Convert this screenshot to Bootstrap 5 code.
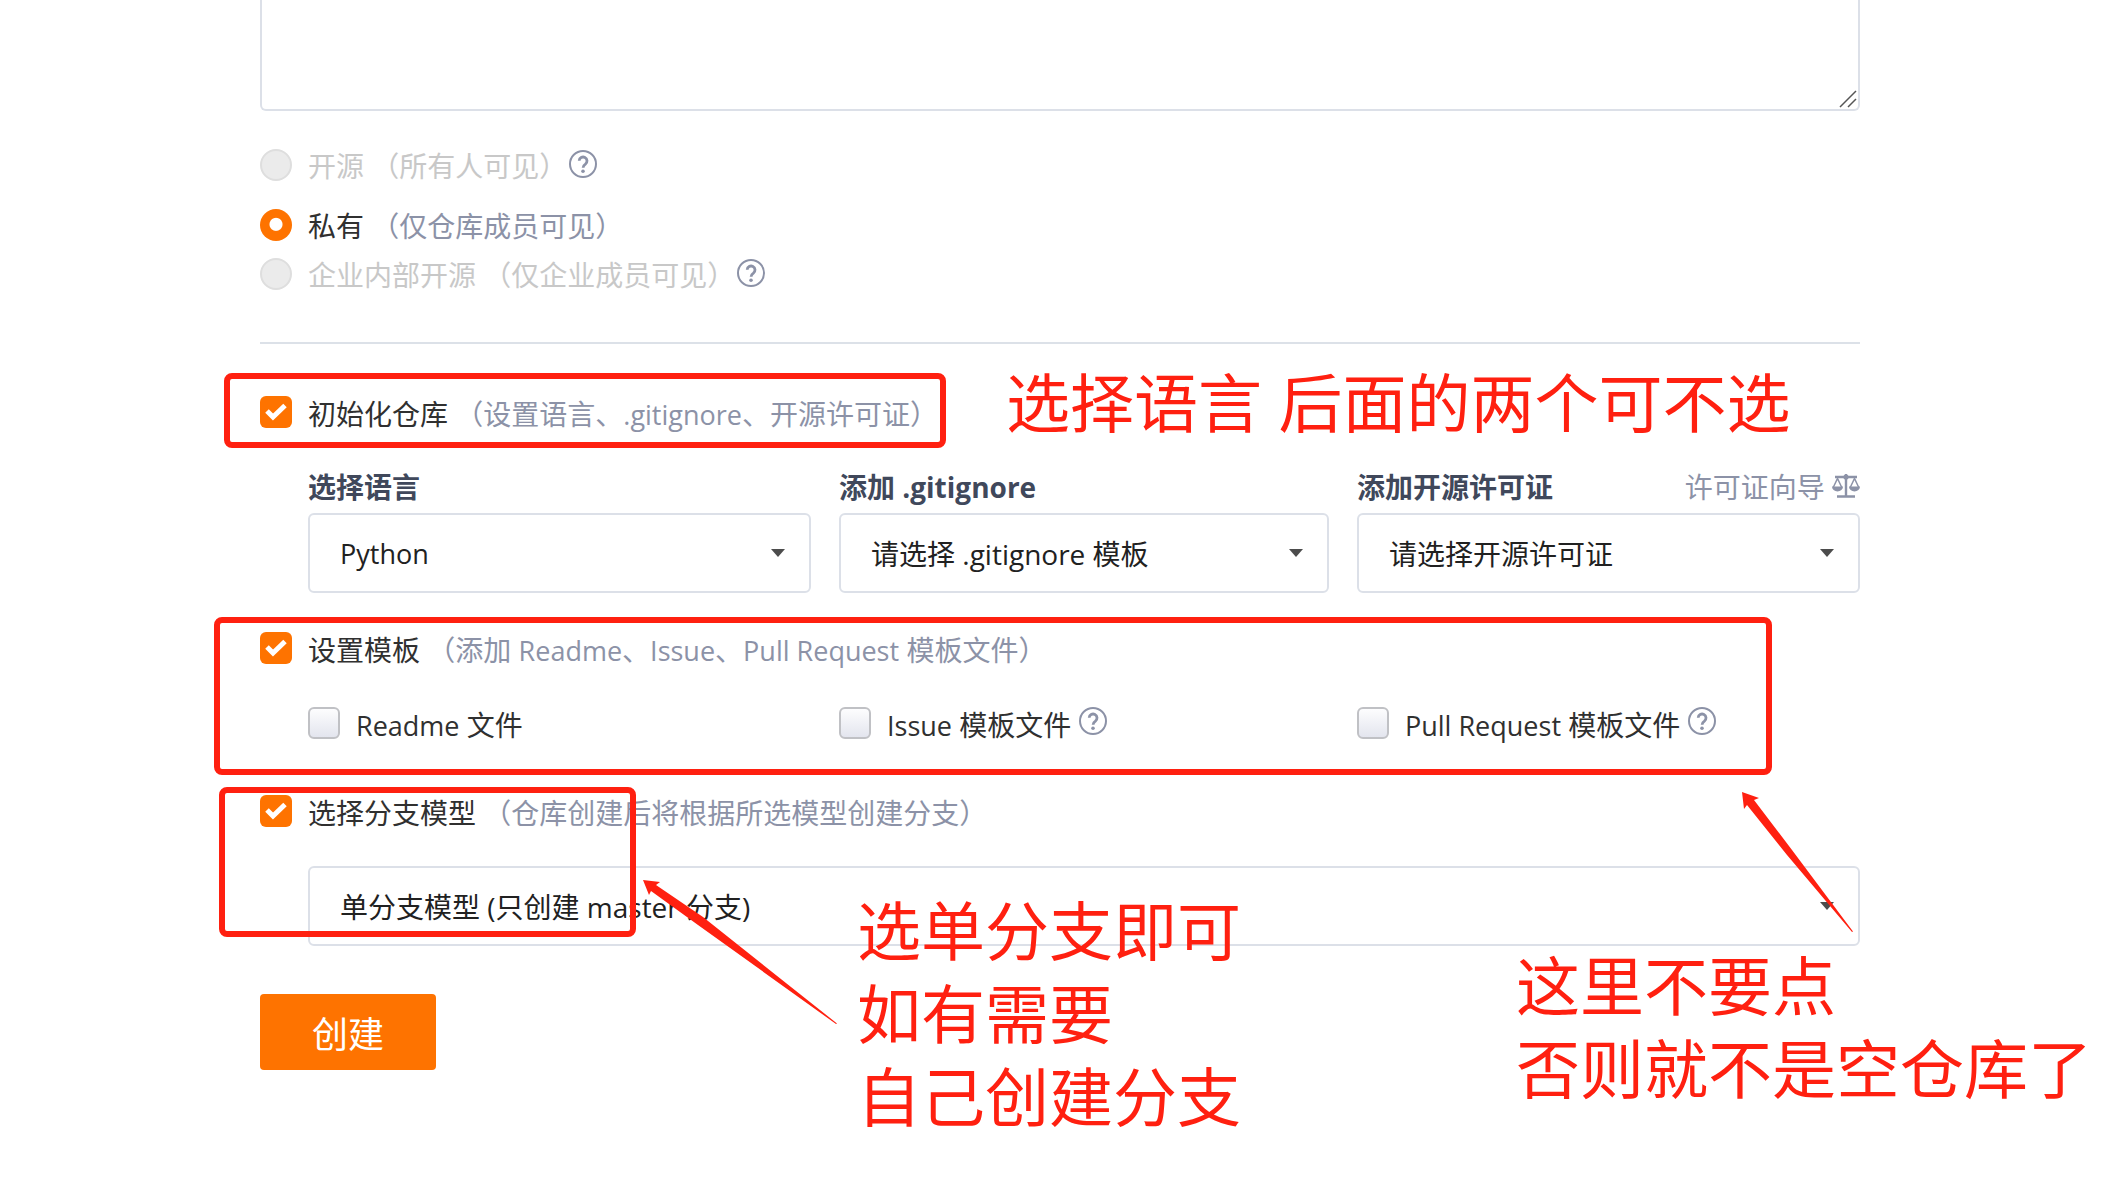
<!DOCTYPE html>
<html lang="zh-CN">
<head>
<meta charset="utf-8">
<meta name="viewport" content="width=device-width, initial-scale=1">
<title>新建仓库</title>
<link href="https://cdn.jsdelivr.net/npm/bootstrap@5.3.0/dist/css/bootstrap.min.css" rel="stylesheet">
<style>
  :root { --ink: #303030; --muted-ink: #8c92a7; --line: #dce0e8; --brand: #fe7300; --note: #ff2010; }
  body { font-family: "Open Sans", "Noto Sans CJK SC", sans-serif; font-size: 28px; line-height: 40px; color: var(--ink); }
  .repo-form { margin: 0 244px 0 260px; padding-bottom: 110px; }
  .desc-box { display: block; width: 100%; height: 111px; border: 2px solid var(--line); border-top: 0; border-radius: 0 0 6px 6px; resize: none; }
  .desc-grip { position: absolute; right: 3px; bottom: 3px; }
  .gap-md { margin-top: 35px; }
  .gap-lg { margin-top: 48px; }
  .latin { font-size: 27px; }
  .opt-line { display: flex; align-items: flex-start; height: 40px; white-space: nowrap; }
  .opt-line label { margin-left: 16px; padding-top: 2px; }
  .opt-line input { appearance: none; flex: none; width: 32px; height: 32px; margin: 4px 0 0; }
  .opt-line input[type=radio] { border-radius: 50%; border: 2px solid #dedede; background: #ebebeb; }
  .opt-line input[type=radio]:checked { border: 0; background: radial-gradient(circle at 50% 48%, #fff 6px, var(--brand) 7px); }
  .opt-line input[type=checkbox] { border: 2px solid #c0c1c5; border-radius: 6px; background: linear-gradient(#fdfdfe, #e3e5ee); }
  .opt-line input[type=checkbox]:checked { border: 0; background: var(--brand) url("data:image/svg+xml,%3Csvg xmlns='http://www.w3.org/2000/svg' viewBox='0 0 32 32'%3E%3Cpath d='M7 15l6 6L25 9.500' fill='none' stroke='%23fff' stroke-width='5'/%3E%3C/svg%3E"); }
  .hint { color: var(--muted-ink); }
  .off, .off .hint { color: #c8c8c8; }
  .help-btn { border: 0; padding: 0; margin-top: 4px; background: none; line-height: 0; color: var(--muted-ink); height: 28px; }
  .vis-group { margin-top: 34px; }
  .vis-group label { padding-top: 1px; }
  .vis-group .help-btn { margin: 5px 0 0 2px; }
  .rule { height: 2px; background: #dce1e8; }
  .inner { margin-left: 48px; }
  .tri { display: grid; grid-template-columns: 503fr 490fr 503fr; column-gap: 28px; }
  .tri > div { min-width: 0; }
  .fld { font-weight: 700; color: #40485b; margin-bottom: 6px; }
  .picker { appearance: none; display: block; width: 100%; height: 80px; padding: 2px 60px 0 30px; color: #212121; border: 2px solid var(--line); border-radius: 6px; background: #fff url("data:image/svg+xml,%3Csvg xmlns='http://www.w3.org/2000/svg' viewBox='0 0 14 8'%3E%3Cpath d='M0 0h14L7 8z' fill='%234c4c4c'/%3E%3C/svg%3E") no-repeat right 24px center / 14px 8px; }
  .guide, .guide:hover { color: var(--muted-ink); text-decoration: none; white-space: nowrap; }
  .create-btn { width: 176px; height: 76px; border: 0; border-radius: 4px; background: var(--brand); color: #fff; font-size: 36px; padding-top: 6px; }
  .mark-box { position: absolute; border: 6px solid var(--note); border-radius: 8px; pointer-events: none; }
  .note-text { position: absolute; color: var(--note); font-size: 64px; line-height: 83px; white-space: nowrap; }
  .note-arrow { position: absolute; fill: var(--note); pointer-events: none; }
  .box-a { left: -36px; top: 373px; width: 722px; height: 75px; }
  .box-b { left: -46px; top: 617px; width: 1558px; height: 158px; }
  .box-c { left: -41px; top: 787px; width: 417px; height: 150px; }
  .note-a { left: 746px; top: 361px; }
  .note-b { left: 597px; top: 889px; }
  .note-c { left: 1256px; top: 944px; }
  .arrow-a { left: 383px; top: 880px; }
  .arrow-b { left: 1482px; top: 792px; }
</style>
</head>
<body>
<svg class="d-none">
  <symbol id="help" viewBox="0 0 28 28"><circle cx="14" cy="14" r="13" fill="none" stroke="currentColor" stroke-width="2"/><path d="M10.200 10.800a3.900 3.900 0 1 1 6.200 3.300c-1.600 1.100-2.300 1.700-2.300 3.700" fill="none" stroke="currentColor" stroke-width="2.800"/><circle cx="14" cy="21.200" r="1.800" fill="currentColor"/></symbol>
  <symbol id="scale" viewBox="0 0 28 24"><path d="M3 3h22M14 0v22M5 22.500h18" fill="none" stroke="currentColor" stroke-width="2.400"/><path d="M1.200 13.500L5.500 4.500l4.300 9M18.200 13.500l4.300-9 4.300 9" fill="none" stroke="currentColor" stroke-width="1.500"/><path d="M0 12.500h11a5.500 5 0 0 1-11 0zM17 12.500h11a5.500 5 0 0 1-11 0z" fill="currentColor"/><circle cx="14" cy="3" r="2.600" fill="currentColor"/></symbol>
</svg>
<main>
<form class="repo-form position-relative">
  <div class="position-relative">
    <textarea class="desc-box" aria-label="仓库介绍"></textarea>
    <svg class="desc-grip" width="18" height="18" viewBox="0 0 18 18" stroke="#555" stroke-width="1.500"><path d="M1 17L17 1M9 17l8-8"/></svg>
  </div>

  <div class="vis-group d-flex flex-column">
    <div class="opt-line off"><input type="radio" name="vis" id="v1" disabled><label for="v1">开源 <span class="hint">（所有人可见）</span></label><button type="button" class="help-btn" aria-label="帮助"><svg width="28" height="28"><use href="#help"/></svg></button></div>
    <div class="opt-line mt-3 pt-1 h-auto"><input type="radio" name="vis" id="v2" checked><label for="v2">私有 <span class="hint">（仅仓库成员可见）</span></label></div>
    <div class="opt-line off mt-2"><input type="radio" name="vis" id="v3" disabled><label for="v3">企业内部开源 <span class="hint">（仅企业成员可见）</span></label><button type="button" class="help-btn" aria-label="帮助"><svg width="28" height="28"><use href="#help"/></svg></button></div>
  </div>

  <div class="rule gap-lg"></div>

  <div class="opt-line gap-lg"><input type="checkbox" id="init" checked><label for="init">初始化仓库 <span class="hint">（设置语言、<span class="latin">.gitignore</span>、开源许可证）</span></label></div>
  <div class="inner tri gap-md">
    <div>
      <label class="fld d-block" for="lang">选择语言</label>
      <select class="picker latin" id="lang"><option>Python</option></select>
    </div>
    <div>
      <label class="fld d-block" for="ignore">添加 .gitignore</label>
      <select class="picker" id="ignore"><option>请选择 .gitignore 模板</option></select>
    </div>
    <div>
      <div class="d-flex justify-content-between">
        <label class="fld" for="license">添加开源许可证</label>
        <a class="guide" href="#">许可证向导 <svg class="align-baseline" width="28" height="24"><use href="#scale"/></svg></a>
      </div>
      <select class="picker" id="license"><option>请选择开源许可证</option></select>
    </div>
  </div>

  <div class="opt-line gap-md"><input type="checkbox" id="tpl" checked><label for="tpl">设置模板 <span class="hint">（添加 <span class="latin">Readme</span>、<span class="latin">Issue</span>、<span class="latin">Pull Request</span> 模板文件）</span></label></div>
  <div class="inner tri gap-md">
    <div class="opt-line"><input type="checkbox" id="t1"><label for="t1"><span class="latin">Readme</span> 文件</label></div>
    <div class="opt-line"><input type="checkbox" id="t2"><label for="t2"><span class="latin">Issue</span> 模板文件</label><button type="button" class="help-btn ms-2" aria-label="帮助"><svg width="28" height="28"><use href="#help"/></svg></button></div>
    <div class="opt-line"><input type="checkbox" id="t3"><label for="t3"><span class="latin">Pull Request</span> 模板文件</label><button type="button" class="help-btn ms-2" aria-label="帮助"><svg width="28" height="28"><use href="#help"/></svg></button></div>
  </div>

  <div class="opt-line gap-lg"><input type="checkbox" id="branch" checked><label for="branch">选择分支模型 <span class="hint">（仓库创建后将根据所选模型创建分支）</span></label></div>
  <div class="inner gap-md">
    <select class="picker" aria-label="选择分支模型"><option>单分支模型 (只创建 master 分支)</option></select>
  </div>

  <button type="submit" class="create-btn gap-lg">创建</button>

  <div class="mark-box box-a"></div>
  <div class="mark-box box-b"></div>
  <div class="mark-box box-c"></div>
  <div class="note-text note-a">选择语言 后面的两个可不选</div>
  <div class="note-text note-b">选单分支即可<br>如有需要<br>自己创建分支</div>
  <div class="note-text note-c">这里不要点<br>否则就不是空仓库了</div>
  <svg class="note-arrow arrow-a" width="196" height="146"><path d="M0 0L17 2L13 5L60 37L194 143.500L193 144L55 45L8 11L6 15z"/></svg>
  <svg class="note-arrow arrow-b" width="112" height="142"><path d="M0 0L17 6L12 8L50 58L111 139.500L110 140L45 63L5 13L2 17z"/></svg>
</form>
</main>
</body>
</html>
